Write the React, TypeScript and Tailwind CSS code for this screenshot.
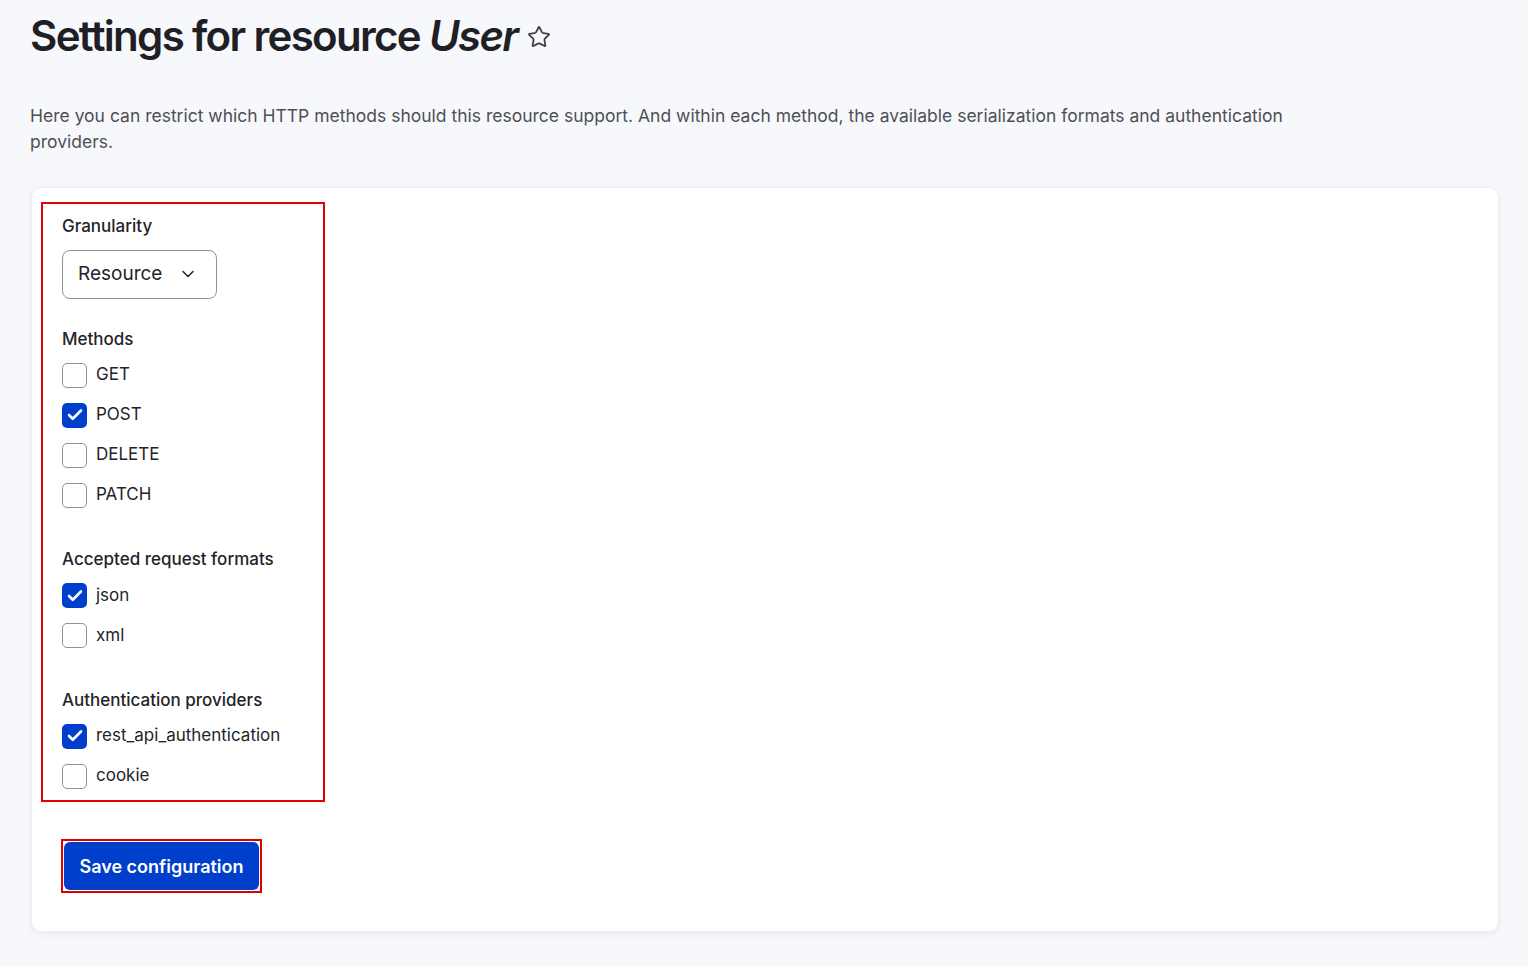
import { ChevronDown, Check, Star } from 'lucide-react'

function Box({ label, checked }: { label: string; checked?: boolean }) {
  return (
    <div className="flex h-[40px] items-center gap-[9px]">
      {checked ? (
        <span className="flex h-[25px] w-[25px] items-center justify-center rounded-[5px] bg-[#003ecc]">
          <Check size={18} strokeWidth={3.5} className="text-white" />
        </span>
      ) : (
        <span className="h-[25px] w-[25px] rounded-[5px] border border-[#919297] bg-white" />
      )}
      <span className="text-[17px] text-[#232429]">{label}</span>
    </div>
  )
}

function Label({ children, className }: { children: string; className?: string }) {
  return <div className={'text-[17px] font-medium text-[#232429] ' + (className ?? '')}>{children}</div>
}

export default function App() {
  return (
    <div className="min-h-[966px] bg-[#f7f8fc] pl-[30px] pr-[29px] pt-[10px] pb-[28px] font-[Inter,sans-serif]">
      <h1 className="flex items-center gap-[10px] text-[42px] font-semibold leading-[52px] tracking-[-0.04em] text-[#1f1f26]">
        <span>
          Settings for resource <em className="font-semibold">User</em>
        </span>
        <Star size={24} strokeWidth={1.8} className="mt-[2px] text-[#404045]" />
      </h1>
      <p className="mt-[41px] max-w-[1270px] text-[17.5px] leading-[26px] text-[#4e4f55]">
        Here you can restrict which HTTP methods should this resource support. And within each method, the available serialization formats and authentication providers.
      </p>
      <div className="mt-[32px] ml-px rounded-[10px] border border-[#eceef3] bg-white px-[9px] pt-[14px] pb-[38px] shadow-[0_2px_6px_rgba(0,0,0,0.06)]">
        <div className="w-[284px] border-2 border-[#e00000] px-[19px] pt-[10px] pb-[4px]">
          <Label>Granularity</Label>
          <div className="mt-[10px] flex h-[49px] w-[155px] items-center justify-between rounded-[8px] border border-[#8e929c] pl-[15px] pr-[18px] text-[19px] text-[#232429]">
            Resource
            <ChevronDown size={20} strokeWidth={1.8} />
          </div>
          <Label className="mt-[28px] mb-[3px]">Methods</Label>
          <Box label="GET" />
          <Box label="POST" checked />
          <Box label="DELETE" />
          <Box label="PATCH" />
          <Label className="mt-[32px] mb-[3px]">Accepted request formats</Label>
          <Box label="json" checked />
          <Box label="xml" />
          <Label className="mt-[32px] mb-[3px]">Authentication providers</Label>
          <Box label="rest_api_authentication" checked />
          <Box label="cookie" />
        </div>
        <div className="ml-[20px] mt-[37px] w-[201px] border-2 border-[#e00000] p-[1px]">
          <button className="h-[48px] w-full rounded-[6px] bg-[#003ecc] text-[18px] font-semibold text-white">
            Save configuration
          </button>
        </div>
      </div>
    </div>
  )
}
